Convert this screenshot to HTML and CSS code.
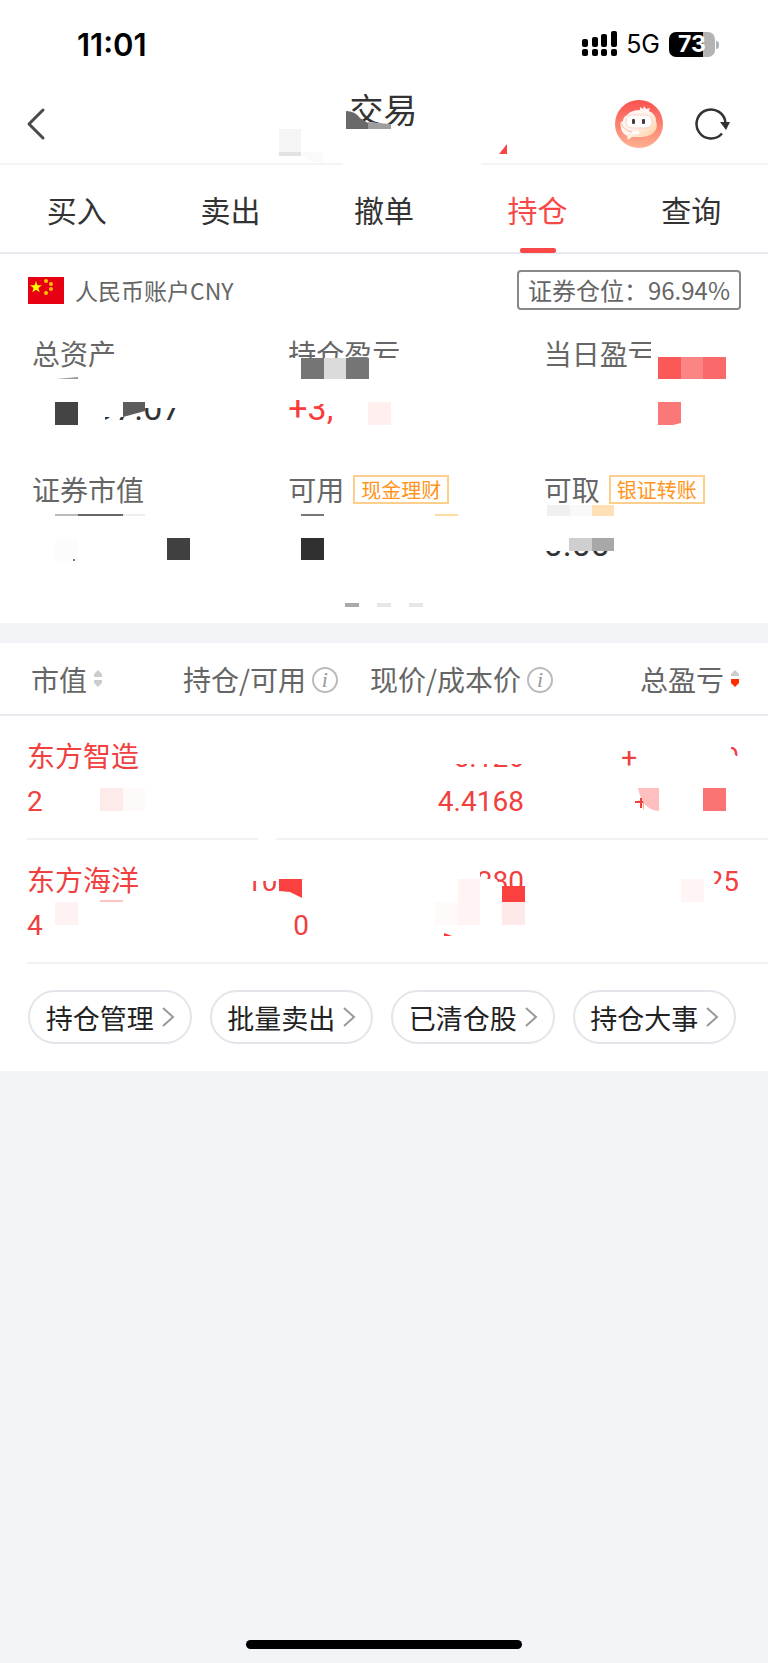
FILE: index.html
```html
<!DOCTYPE html>
<html lang="zh-CN">
<head>
    <meta charset="UTF-8">
    <meta name="viewport" content="width=device-width, initial-scale=1.0">
    <title>交易</title>
    <link rel="stylesheet" href="styles.css">
</head>
<body>
    <div class="status-bar">
        <span class="time">11:01</span>
        <div class="status-icons">
            <svg class="signal" width="36" height="26" viewBox="0 0 36 26">
                <rect x="0" y="8" width="6" height="8" rx="2"/>
                <rect x="10" y="6" width="6" height="10" rx="2"/>
                <rect x="19" y="3" width="6" height="13" rx="2"/>
                <rect x="29" y="0" width="6" height="16" rx="2"/>
                <rect x="0" y="18" width="6" height="7" rx="2"/>
                <rect x="10" y="18" width="6" height="7" rx="2"/>
                <rect x="19" y="18" width="6" height="7" rx="2"/>
                <rect x="29" y="18" width="6" height="7" rx="2"/>
            </svg>
            <span class="network">5G</span>
            <span class="battery">73</span>
        </div>
    </div>

    <header class="header">
        <button class="icon-btn back" aria-label="返回">
            <svg width="20" height="34" viewBox="0 0 20 34"><path d="M17 3L3 17l14 14" fill="none" stroke="#4a4a4a" stroke-width="3" stroke-linecap="round" stroke-linejoin="round"/></svg>
        </button>
        <h1>交易</h1>
        <div class="header-actions">
            <button class="icon-btn" aria-label="客服">
                <svg width="48" height="48" viewBox="0 0 48 48">
                    <defs>
                        <linearGradient id="face" x1="0" y1="0" x2="0" y2="1">
                            <stop offset="0" stop-color="#f9504e"/>
                            <stop offset="1" stop-color="#fdb191"/>
                        </linearGradient>
                        <linearGradient id="chin" x1="0" y1="0" x2="1" y2="1">
                            <stop offset="0.5" stop-color="#fff4ef"/>
                            <stop offset="1" stop-color="#ffc98c"/>
                        </linearGradient>
                    </defs>
                    <circle cx="24" cy="24" r="24" fill="url(#face)"/>
                    <path d="M12 15q4-5 13-5l0-3 3 2 1-3 2 3 4-1-1 3q7 3 7 10 2 6-1 10-3 5-13 6H17l-4 3-1-4q-6-3-6-9-2-5 2-6 0-4 4-6z" fill="url(#chin)"/>
                    <rect x="11" y="15" width="26" height="13" rx="6" fill="#fff" stroke="#fbd2c5"/>
                    <path d="M6 23q3 8 12 9" fill="none" stroke="#f9b9a4"/>
                    <rect x="17" y="31" width="7" height="3" rx="1" fill="#fff"/>
                    <rect x="17" y="19" width="3" height="5" rx="1" fill="#4a3a3a"/>
                    <rect x="27" y="19" width="3" height="5" rx="1" fill="#4a3a3a"/>
                </svg>
            </button>
            <button class="icon-btn" aria-label="刷新">
                <svg width="36" height="34" viewBox="0 0 36 34">
                    <path d="M27 26.500A14.500 14.500 0 1 1 30.500 16" fill="none" stroke="#333" stroke-width="2.500"/>
                    <path d="M25 15h10l-4 8z" fill="#333"/>
                </svg>
            </button>
        </div>
        <svg class="mosaic" viewBox="0 88 768 77" aria-hidden="true">
            <rect x="343" y="160" width="138" height="5" fill="#fff"/>
            <path d="M340 110h10l14 14 5-2 16 2v6h-45z" fill="#fff"/>
            <path d="M346 111q9 0 14 7l8 5v6h-22z" fill="#696969"/>
            <path d="M368 122l8 1 15 1v5h-23z" fill="#9e9e9e"/>
            <rect x="279" y="129" width="22" height="23" fill="#f5f5f5"/>
            <rect x="279" y="152" width="22" height="4" fill="#e2e2e2"/>
            <path d="M301 152h22v10h-10q-6-2-12-8z" fill="#fafafa"/>
            <path d="M499 154l8-10v10z" fill="#fa4545"/>
        </svg>
    </header>

    <nav class="tabs">
        <a href="#">买入</a>
        <a href="#">卖出</a>
        <a href="#">撤单</a>
        <a href="#" class="active">持仓</a>
        <a href="#">查询</a>
    </nav>

    <section class="account">
        <div class="account-head">
            <svg class="flag" width="36" height="27" viewBox="0 0 36 27">
                <rect width="36" height="27" fill="#e60012"/>
                <path d="M8 4l1.400 4.300H14l-3.600 2.700 1.300 4.300L8 12.700l-3.700 2.600 1.300-4.300L2 8.300h4.600z" fill="#ff0"/>
                <g fill="#ffc400">
                    <circle cx="18" cy="4" r="2"/>
                    <circle cx="23" cy="7" r="2"/>
                    <circle cx="23" cy="12" r="2"/>
                    <circle cx="18" cy="16" r="2"/>
                </g>
            </svg>
            <span class="account-name">人民币账户CNY</span>
            <button class="position-rate">证券仓位：96.94%</button>
        </div>
        <div class="stats">
            <div class="stat">
                <div class="label">总资产</div>
                <div class="value">00,097.07</div>
            </div>
            <div class="stat">
                <div class="label">持仓盈亏</div>
                <div class="value up">+3,</div>
            </div>
            <div class="stat">
                <div class="label">当日盈亏</div>
                <div class="value up"></div>
            </div>
            <div class="stat">
                <div class="label">证券市值</div>
                <div class="value"></div>
            </div>
            <div class="stat">
                <div class="label">可用<a href="#" class="tag">现金理财</a></div>
                <div class="value"></div>
            </div>
            <div class="stat">
                <div class="label">可取<a href="#" class="tag">银证转账</a></div>
                <div class="value">0.00</div>
            </div>
        </div>
        <div class="pager">
            <span class="on"></span>
            <span></span>
            <span></span>
        </div>
        <svg class="mosaic" viewBox="0 254 768 369" aria-hidden="true">
            <g fill="#fff">
                <path d="M30 388h160v20h-45v3l-22 6h-18v12H30z"/>
                <path d="M286 358h120v20H286zM630 358h30v20h-30zM651 340h10v20h-10z"/>
                <path d="M308 388h30v16h-30zM336 388h10v40h-10z"/>
                <path d="M540 526h80v25h-80z"/>
            </g>
            <path d="M56 379l22-2v2z" fill="#999"/>
            <rect x="55" y="402" width="23" height="23" fill="#444"/>
            <path d="M123 402h22v9l-22 6z" fill="#5c5c5c"/>
            <rect x="301" y="358" width="23" height="21" fill="#757575"/>
            <rect x="324" y="358" width="22" height="21" fill="#dbdbdb"/>
            <rect x="346" y="358" width="23" height="21" fill="#757575"/>
            <rect x="368" y="402" width="23" height="23" fill="#ffefef"/>
            <rect x="658" y="357" width="23" height="22" fill="#fb5858"/>
            <rect x="681" y="357" width="22" height="22" fill="#fb8585"/>
            <rect x="703" y="357" width="23" height="22" fill="#fb6a6a"/>
            <path d="M658 402h23v21l-8 2h-15z" fill="#fb7878"/>
            <rect x="55" y="514" width="23" height="2" fill="#bbb"/>
            <rect x="78" y="514" width="45" height="2" fill="#666"/>
            <rect x="123" y="514" width="22" height="2" fill="#eee"/>
            <rect x="55" y="539" width="23" height="22" fill="#fcfcfc"/>
            <rect x="73" y="559" width="2" height="2" fill="#777"/>
            <rect x="167" y="538" width="23" height="22" fill="#404040"/>
            <rect x="301" y="514" width="23" height="2" fill="#777"/>
            <rect x="435" y="514" width="23" height="2" fill="#ffdba6"/>
            <rect x="301" y="538" width="23" height="22" fill="#303030"/>
            <rect x="547" y="505" width="23" height="11" fill="#f0f0f0"/>
            <rect x="570" y="505" width="22" height="11" fill="#f9f9f9"/>
            <rect x="592" y="505" width="22" height="11" fill="#ffdfb5"/>
            <rect x="569" y="538" width="23" height="13" fill="#cfcfcf"/>
            <rect x="592" y="538" width="22" height="13" fill="#a8a8a8"/>
        </svg>
    </section>

    <section class="holdings">
        <table>
            <thead>
                <tr>
                    <th><button class="sort">市值<svg width="10" height="18" viewBox="0 0 10 18"><path d="M5 0l4 4v3H1V4z" fill="#ccc"/><path d="M1 10h8v3l-4 4-4-4z" fill="#ccc"/></svg></button></th>
                    <th>持仓/可用<button class="info" aria-label="说明">i</button></th>
                    <th>现价/成本价<button class="info" aria-label="说明">i</button></th>
                    <th><button class="sort">总盈亏<svg width="10" height="18" viewBox="0 0 10 18"><path d="M5 0l4 4v2H1V4z" fill="#ccc"/><path d="M1 9h8v4l-4 4-4-4z" fill="#ff2d00"/></svg></button></th>
                </tr>
            </thead>
            <tbody>
                <tr>
                    <td>东方智造<br>2</td>
                    <td></td>
                    <td>5.126<br>4.4168</td>
                    <td>+0000.00<br>+000.00</td>
                </tr>
                <tr>
                    <td>东方海洋<br>4</td>
                    <td>1000<br>0</td>
                    <td>0.280<br>&nbsp;</td>
                    <td>25<br>&nbsp;</td>
                </tr>
            </tbody>
        </table>
        <div class="actions">
            <button>持仓管理<svg width="13" height="20" viewBox="0 0 13 20"><path d="M1 1l10 9-10 9"/></svg></button>
            <button>批量卖出<svg width="13" height="20" viewBox="0 0 13 20"><path d="M1 1l10 9-10 9"/></svg></button>
            <button>已清仓股<svg width="13" height="20" viewBox="0 0 13 20"><path d="M1 1l10 9-10 9"/></svg></button>
            <button>持仓大事<svg width="13" height="20" viewBox="0 0 13 20"><path d="M1 1l10 9-10 9"/></svg></button>
        </div>
        <svg class="mosaic" viewBox="0 643 768 428" aria-hidden="true">
            <g fill="#fff">
                <path d="M450 740h80v24h-80z"/>
                <path d="M637 740h94v9l5 7h11v20H637zM644 782h100v36H644z"/>
                <path d="M258 836h18v5h-18z"/>
                <path d="M240 866h72v15h-72zM278 866h34v32h-34z"/>
                <path d="M450 866h30v32h-30zM480 879h16l6 8h24v14h-46z"/>
                <path d="M708 884h18v14h-18zM708 866h6v20h-6z"/>
            </g>
            <rect x="100" y="788" width="23" height="23" fill="#ffeaea"/>
            <rect x="123" y="788" width="22" height="23" fill="#fffafa"/>
            <path d="M638 788h21v23q-17-1-21-23z" fill="#ffbfbf"/>
            <path d="M635 802h8M641 798v10" stroke="#f04040" stroke-width="2"/>
            <rect x="703" y="788" width="23" height="23" fill="#fc7373"/>
            <rect x="100" y="900" width="23" height="2" fill="#fdc4c4"/>
            <rect x="55" y="902" width="23" height="23" fill="#fff2f2"/>
            <path d="M279 879h23v19l-12-6-11-1z" fill="#fb4040"/>
            <rect x="458" y="879" width="22" height="46" fill="#fff3f3"/>
            <rect x="435" y="902" width="23" height="23" fill="#fffafa"/>
            <rect x="502" y="886" width="23" height="16" fill="#fb4040"/>
            <rect x="502" y="902" width="23" height="23" fill="#fee9e9"/>
            <path d="M444 933l8 3h-8z" fill="#f33"/>
            <rect x="681" y="879" width="23" height="23" fill="#fff5f5"/>
        </svg>
    </section>

    <div class="home-indicator"></div>
</body>
</html>
```

FILE: styles.css
```css
* {
    box-sizing: border-box;
}
body {
    margin: 0;
    min-height: 100vh;
    display: flex;
    flex-direction: column;
    background-color: #f2f4f8;
    color: #333;
    font-family: "Noto Sans CJK SC", "Noto Sans", sans-serif;
    font-size: 28px;
}
a {
    color: inherit;
    text-decoration: none;
}
button {
    padding: 0;
    border: none;
    background: none;
    color: inherit;
    font: inherit;
    cursor: pointer;
}
svg {
    display: block;
}

/* status bar */
.status-bar {
    display: flex;
    justify-content: space-between;
    align-items: center;
    height: 88px;
    padding: 0 49px 0 77px;
    background-color: #fff;
    color: #000;
    font-family: Inter, sans-serif;
}
.time {
    font-size: 31px;
    font-weight: 600;
}
.status-icons {
    display: flex;
    align-items: center;
}
.network {
    margin: 0 9px 0 8px;
    font-size: 25px;
}
.battery {
    position: relative;
    width: 46px;
    height: 25px;
    margin-right: 4px;
    border-radius: 7px;
    background: linear-gradient(90deg, #000 73%, #b3b3b3 73%);
    color: #fff;
    font-size: 23px;
    font-weight: 700;
    line-height: 25px;
    text-align: center;
}
.battery::after {
    content: "";
    position: absolute;
    top: 9px;
    right: -4px;
    width: 3px;
    height: 8px;
    border-radius: 0 3px 3px 0;
    background-color: #b3b3b3;
}

/* header */
.header {
    position: relative;
    display: grid;
    grid-template-columns: 1fr auto 1fr;
    align-items: center;
    height: 77px;
    padding: 0 37px 4px 26px;
    border-bottom: 2px solid #f3f4f8;
    background-color: #fff;
}
.header h1 {
    margin: 0 0 0 10px;
    padding-bottom: 29px;
    font-size: 34px;
    font-weight: 400;
    line-height: 42px;
}
.header-actions {
    display: flex;
    justify-content: flex-end;
    align-items: center;
    gap: 32px;
}
.mosaic {
    position: absolute;
    top: 0;
    left: 0;
    width: 100%;
    pointer-events: none;
}

/* tabs */
.tabs {
    display: grid;
    grid-template-columns: repeat(5, 1fr);
    height: 89px;
    border-bottom: 2px solid #e8eaef;
    background-color: #fff;
    font-size: 30px;
    line-height: 88px;
    text-align: center;
}
.tabs a {
    position: relative;
}
.tabs .active {
    color: #f84848;
}
.tabs .active::after {
    content: "";
    position: absolute;
    left: 50%;
    bottom: 0;
    width: 36px;
    height: 5px;
    margin-left: -18px;
    border-radius: 2px;
    background-color: #f84848;
}

/* account */
.account {
    position: relative;
    padding-bottom: 16px;
    background-color: #fff;
    color: #666;
}
.account-head {
    display: flex;
    align-items: center;
    padding: 16px 27px 0 28px;
}
.account-name {
    margin-left: 11px;
    font-size: 23px;
}
.position-rate {
    height: 40px;
    margin-left: auto;
    padding: 0 9px;
    border: 2px solid #888;
    border-radius: 4px;
    font-size: 24px;
    line-height: 36px;
}
.stats {
    display: grid;
    grid-template-columns: repeat(3, 1fr);
    row-gap: 40px;
    padding: 20px 0 0 32px;
}
.stats .stat:nth-child(3n + 2) .label,
.stats .stat:nth-child(3n + 2) .value {
    margin-left: 11px;
}
.stats .stat:nth-child(3n) .label,
.stats .stat:nth-child(3n) .value {
    margin-left: 21px;
}
.label {
    display: flex;
    align-items: center;
    height: 46px;
    line-height: 46px;
}
.tag {
    margin-left: 9px;
    padding: 0 6px;
    border: 2px solid #fdcf8c;
    color: #ff9520;
    font-size: 20px;
    line-height: 25px;
}
.value {
    height: 50px;
    padding-top: 9px;
    color: #333;
    font-family: Roboto, "Noto Sans CJK SC", sans-serif;
    font-size: 34px;
    line-height: 46px;
}
.up {
    color: #fa3c3c;
}
.pager {
    display: flex;
    justify-content: center;
    gap: 18px;
    padding-top: 41px;
}
.pager span {
    width: 14px;
    height: 4px;
    background-color: #e6e6e6;
}
.pager .on {
    background-color: #aaa;
}

/* holdings */
.holdings {
    position: relative;
    margin-top: 20px;
    background-color: #fff;
}
table {
    width: 100%;
    border-spacing: 0;
    table-layout: fixed;
}
th {
    height: 73px;
    padding: 0;
    border-bottom: 2px solid #e8eaf0;
    color: #666;
    font-weight: 400;
    text-align: right;
    white-space: nowrap;
}
th:nth-child(1) {
    width: 22%;
    padding-left: 31px;
    text-align: left;
}
th:nth-child(2) {
    width: 22%;
}
th:nth-child(3) {
    width: 28%;
}
th:nth-child(4) {
    padding-right: 28px;
}
.sort {
    display: inline-flex;
    align-items: center;
    gap: 6px;
}
.info {
    width: 26px;
    height: 26px;
    margin-left: 6px;
    border: 2px solid #bbb;
    border-radius: 50%;
    color: #999;
    font: italic 22px/20px "Liberation Serif", serif;
    vertical-align: 4px;
}
td {
    height: 124px;
    padding: 20px 29px 14px 0;
    border-bottom: 2px solid #f1f2f6;
    color: #f04040;
    font-family: Roboto, "Noto Sans CJK SC", sans-serif;
    line-height: 44px;
    text-align: right;
    vertical-align: top;
}
td:first-child {
    padding-left: 27px;
    padding-right: 0;
    border-bottom: none;
    background: linear-gradient(#f1f2f6, #f1f2f6) 27px 100% / 100% 2px no-repeat;
    text-align: left;
}
.actions {
    display: grid;
    grid-template-columns: repeat(4, 1fr);
    gap: 18px;
    padding: 26px 32px 27px 28px;
}
.actions button {
    display: flex;
    justify-content: center;
    align-items: center;
    gap: 8px;
    height: 54px;
    padding-left: 1px;
    border: 2px solid #e4e5ea;
    border-radius: 27px;
    color: #222;
    font-size: 27px;
}
.actions path {
    fill: none;
    stroke: #999;
    stroke-width: 2;
}

.home-indicator {
    width: 36%;
    height: 9px;
    margin: auto auto 14px;
    border-radius: 5px;
    background-color: #000;
}
```
